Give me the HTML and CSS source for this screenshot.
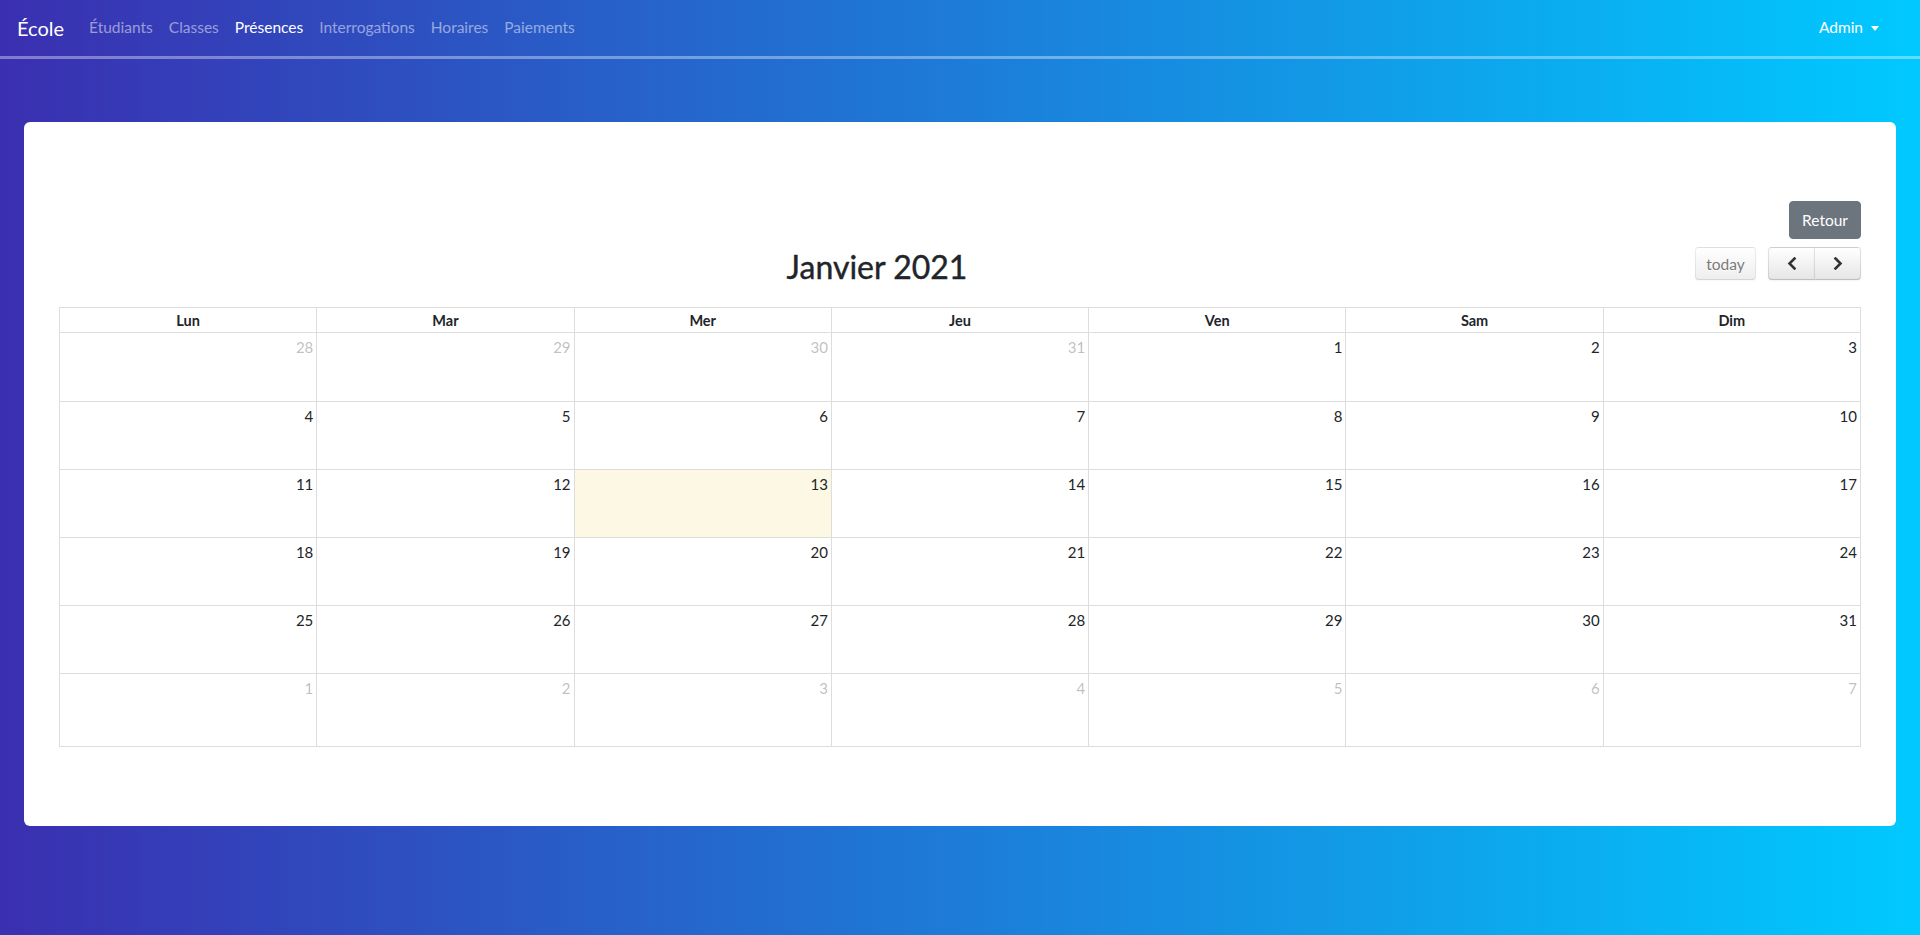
FILE: index.html
```html
<!DOCTYPE html>
<html lang="fr">
<head>
<meta charset="utf-8">
<title>École — Présences</title>
<link rel="stylesheet" href="styles.css">
</head>
<body>
<nav class="navbar">
  <a class="brand" href="#">École</a>
  <ul class="nav-links">
    <li><a class="nav-link" href="#">Étudiants</a></li>
    <li><a class="nav-link" href="#">Classes</a></li>
    <li><a class="nav-link active" href="#">Présences</a></li>
    <li><a class="nav-link" href="#">Interrogations</a></li>
    <li><a class="nav-link" href="#">Horaires</a></li>
    <li><a class="nav-link" href="#">Paiements</a></li>
  </ul>
  <a class="nav-user" href="#">Admin<span class="caret"></span></a>
</nav>

<main class="page">
  <section class="card">
    <div class="actions">
      <button class="btn-back" type="button">Retour</button>
    </div>
    <div class="calendar">
      <div class="toolbar">
        <h2 class="title">Janvier 2021</h2>
        <div class="tb-right">
          <button class="fc-btn fc-today" type="button" disabled>today</button>
          <div class="fc-group">
            <button class="fc-btn fc-prev" type="button" aria-label="prev">
              <svg width="10" height="13" viewBox="0 0 10 13"><path d="M7.5 1.5 L2.5 6.5 L7.5 11.5" fill="none" stroke="#333" stroke-width="2.6" stroke-linecap="square" stroke-linejoin="miter"/></svg>
            </button>
            <button class="fc-btn fc-next" type="button" aria-label="next">
              <svg width="10" height="13" viewBox="0 0 10 13"><path d="M2.5 1.5 L7.5 6.5 L2.5 11.5" fill="none" stroke="#333" stroke-width="2.6" stroke-linecap="square" stroke-linejoin="miter"/></svg>
            </button>
          </div>
        </div>
      </div>

      <div class="month">
        <div class="dh">Lun</div><div class="dh">Mar</div><div class="dh">Mer</div><div class="dh">Jeu</div><div class="dh">Ven</div><div class="dh">Sam</div><div class="dh">Dim</div>

        <div class="day other">28</div><div class="day other">29</div><div class="day other">30</div><div class="day other">31</div><div class="day">1</div><div class="day">2</div><div class="day">3</div>

        <div class="day">4</div><div class="day">5</div><div class="day">6</div><div class="day">7</div><div class="day">8</div><div class="day">9</div><div class="day">10</div>

        <div class="day">11</div><div class="day">12</div><div class="day today">13</div><div class="day">14</div><div class="day">15</div><div class="day">16</div><div class="day">17</div>

        <div class="day">18</div><div class="day">19</div><div class="day">20</div><div class="day">21</div><div class="day">22</div><div class="day">23</div><div class="day">24</div>

        <div class="day">25</div><div class="day">26</div><div class="day">27</div><div class="day">28</div><div class="day">29</div><div class="day">30</div><div class="day">31</div>

        <div class="day other">1</div><div class="day other">2</div><div class="day other">3</div><div class="day other">4</div><div class="day other">5</div><div class="day other">6</div><div class="day other">7</div>
      </div>
    </div>
  </section>
</main>
</body>
</html>
```

FILE: styles.css
```css
* { box-sizing: border-box; }

html, body {
  margin: 0;
  padding: 0;
}

body {
  min-height: 100vh;
  font-family: Lato, "Open Sans", "Liberation Sans", sans-serif;
  font-size: 16px;
  line-height: 1.5;
  color: #212529;
  background: linear-gradient(to right, #3a2fb0 0%, #00c9ff 100%);
}

/* ---------- navbar ---------- */
.navbar {
  display: flex;
  align-items: center;
  height: 59px;
  padding: 0 41px 0 17px;
  border-bottom: 3px solid rgba(255, 255, 255, 0.37);
}

.brand {
  font-size: 20px;
  color: #fff;
  text-decoration: none;
  margin-right: 17px;
  line-height: 30px;
}

.nav-links {
  display: flex;
  list-style: none;
  margin: 0;
  padding: 0;
  flex: 1;
}

.nav-link {
  display: block;
  padding: 8px 8px;
  color: rgba(255, 255, 255, 0.5);
  text-decoration: none;
  font-size: 15.5px;
}

.nav-link.active { color: #fff; }

.nav-user {
  display: flex;
  align-items: center;
  color: #fff;
  text-decoration: none;
  font-size: 15.5px;
}

.caret {
  display: inline-block;
  margin-left: 8px;
  width: 0;
  height: 0;
  border-top: 5px solid #fff;
  border-left: 4.5px solid transparent;
  border-right: 4.5px solid transparent;
}

/* ---------- page / card ---------- */
.page {
  padding: 63px 24px 0 24px;
}

.card {
  background: #fff;
  border-radius: 6px;
  padding: 79px 35px;
}

.actions {
  display: flex;
  justify-content: flex-end;
  margin-bottom: 6px;
}

.btn-back {
  font-family: inherit;
  font-size: 15.5px;
  line-height: 24px;
  height: 38px;
  padding: 6px 12px;
  color: #fff;
  background: #6c757d;
  border: 1px solid #6c757d;
  border-radius: 4px;
}

/* ---------- calendar toolbar ---------- */
.toolbar {
  display: flex;
  align-items: flex-start;
  height: 38px;
  margin-bottom: 24px;
}

.title {
  flex: 1;
  margin: 0;
  padding-top: 6px;
  text-align: center;
  font-size: 32px;
  font-weight: 400;
  line-height: 32px;
  color: #212529;
  -webkit-text-stroke: 0.4px #212529;
}

.tb-right {
  display: flex;
  align-items: center;
  padding-top: 2px;
}

.fc-btn {
  font-family: inherit;
  font-size: 15.5px;
  height: 33px;
  padding: 0 10px;
  color: #333;
  background-color: #f5f5f5;
  background-image: linear-gradient(to bottom, #fff, #e6e6e6);
  border: 1px solid;
  border-color: rgba(0,0,0,.1) rgba(0,0,0,.1) rgba(0,0,0,.25);
  text-shadow: 0 1px 1px rgba(255,255,255,.75);
  box-shadow: inset 0 1px 0 rgba(255,255,255,.2), 0 1px 2px rgba(0,0,0,.05);
  display: flex;
  align-items: center;
  justify-content: center;
}

.fc-today {
  width: 61px;
  border-radius: 4px;
  opacity: .65;
}

.fc-group {
  display: flex;
  margin-left: 12px;
}

.fc-prev, .fc-next { width: 47px; }
.fc-prev { border-radius: 4px 0 0 4px; }
.fc-next { border-radius: 0 4px 4px 0; margin-left: -1px; }

/* ---------- month grid ---------- */
.month {
  display: grid;
  grid-template-columns: repeat(7, 1fr);
  grid-template-rows: 25px 69px 68px 68px 68px 68px 73px;
  border-top: 1px solid #ddd;
  border-left: 1px solid #ddd;
}

.dh, .day {
  border-right: 1px solid #ddd;
  border-bottom: 1px solid #ddd;
}

.dh {
  text-align: center;
  font-weight: 700;
  font-size: 14.5px;
  line-height: 24px;
  padding-top: 1px;
}

.day {
  text-align: right;
  padding: 3px 3px 0 0;
  font-size: 15px;
  line-height: 23px;
}

.day.other { color: rgba(33, 37, 41, 0.3); }
.day.today { background: #fcf8e3; }
```
